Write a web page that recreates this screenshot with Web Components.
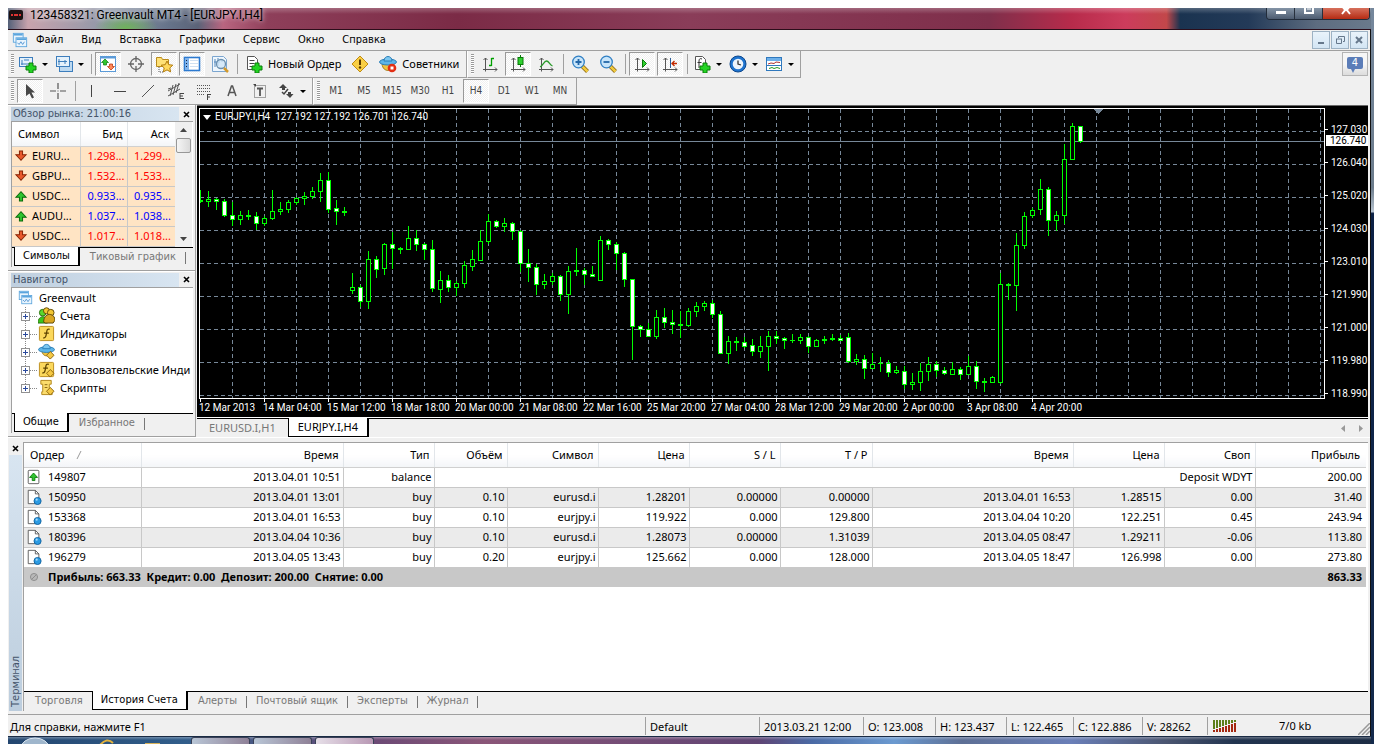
<!DOCTYPE html>
<html lang="ru">
<head>
<meta charset="utf-8">
<title>123458321: Greenvault MT4 - [EURJPY.I,H4]</title>
<style>
    body {
        margin: 0;
        padding: 8px 4px 0 8px;
        box-sizing: border-box;
        min-height: 100vh;
        display: flex;
        background: #fff;
        color: #000;
        font: 11px/16px "Noto Sans", "Open Sans", sans-serif;
        --narrow: "DejaVu Sans Condensed", "Noto Sans", sans-serif;
        --face: #f0f0f0;
        --line: #a0a0a0;
    }
    app-window { flex: 1; min-width: 0; }
</style>
</head>
<body>
<app-window>
    <title-bar slot="title">123458321: Greenvault MT4 - [EURJPY.I,H4]</title-bar>
    <menu-bar slot="menu"></menu-bar>
    <tool-row slot="tools">
        <tool-band>
            <tool-button icon="newchart" drop label="Новый график"></tool-button>
            <tool-button icon="profiles" drop label="Профили"></tool-button>
            <tool-sep></tool-sep>
            <tool-button icon="market" pressed label="Обзор рынка"></tool-button>
            <tool-button icon="target" label="Окно данных"></tool-button>
            <tool-button icon="folder" pressed label="Навигатор"></tool-button>
            <tool-button icon="terminal" pressed label="Терминал"></tool-button>
            <tool-button icon="tester" label="Тестер стратегий"></tool-button>
            <tool-sep></tool-sep>
            <tool-button icon="order">Новый Ордер</tool-button>
            <tool-button icon="warn" label="MetaEditor"></tool-button>
            <tool-button icon="experts">Советники</tool-button>
        </tool-band>
        <tool-band>
            <tool-button icon="bars" label="Бары"></tool-button>
            <tool-button icon="candles" pressed label="Японские свечи"></tool-button>
            <tool-button icon="linechart" label="Линия"></tool-button>
            <tool-sep></tool-sep>
            <tool-button icon="zoomin" label="Увеличить"></tool-button>
            <tool-button icon="zoomout" label="Уменьшить"></tool-button>
            <tool-sep></tool-sep>
            <tool-button icon="autoscroll" pressed label="Автопрокрутка"></tool-button>
            <tool-button icon="shift" pressed label="Сдвиг графика"></tool-button>
            <tool-sep></tool-sep>
            <tool-button icon="indicators" drop label="Индикаторы"></tool-button>
            <tool-button icon="clock" drop label="Периоды"></tool-button>
            <tool-button icon="templates" drop label="Шаблоны"></tool-button>
        </tool-band>
        <news-button slot="end">4</news-button>
    </tool-row>
    <tool-row slot="tools">
        <tool-band>
            <tool-button icon="cursor" pressed label="Курсор"></tool-button>
            <tool-button icon="cross" label="Перекрестие"></tool-button>
            <tool-sep></tool-sep>
            <tool-button icon="vline" label="Вертикальная линия"></tool-button>
            <tool-button icon="hline" label="Горизонтальная линия"></tool-button>
            <tool-button icon="trend" label="Трендовая линия"></tool-button>
            <tool-button icon="channel" label="Канал"></tool-button>
            <tool-button icon="fibo" label="Фибоначчи"></tool-button>
            <tool-button icon="textA" label="Текст"></tool-button>
            <tool-button icon="textT" label="Метка"></tool-button>
            <tool-button icon="arrows" drop label="Стрелки"></tool-button>
        </tool-band>
        <tool-band>
            <tool-button period>M1</tool-button>
            <tool-button period>M5</tool-button>
            <tool-button period>M15</tool-button>
            <tool-button period>M30</tool-button>
            <tool-button period>H1</tool-button>
            <tool-button period pressed>H4</tool-button>
            <tool-button period>D1</tool-button>
            <tool-button period>W1</tool-button>
            <tool-button period>MN</tool-button>
        </tool-band>
    </tool-row>
    <dock-panel slot="left" heading="Обзор рынка: 21:00:16">
        <market-watch></market-watch>
        <tab-strip slot="tabs" tabs="Символы|Тиковый график" active="0"></tab-strip>
    </dock-panel>
    <dock-panel slot="left" heading="Навигатор" grow>
        <nav-tree></nav-tree>
        <tab-strip slot="tabs" tabs="Общие|Избранное" active="0"></tab-strip>
    </dock-panel>
    <price-chart slot="chart"></price-chart>
    <tab-strip slot="chart" class="charts" tabs="EURUSD.I,H1|EURJPY.I,H4" active="1" scroll></tab-strip>
    <trade-terminal slot="terminal"></trade-terminal>
    <status-bar slot="status"></status-bar>
</app-window>

<script>
const G = '#00a000';
const axes = '<path d="M4.500 3v13.500M2 14.500h14M2.500 5l2-2 2 2M14 12.500l2 2-2 2" fill="none" stroke="#555"/>';
const plus = '<path d="M10 8h4v3h3v4h-3v3h-4v-3H7v-4h3z" fill="#22d422" stroke="#0a7d0a"/>';

const ICONS = {
    newchart: `<rect x=".5" y="2.500" width="13" height="9" fill="#e4f1fb" stroke="#3d7ebd"/><path d="M3 5v5M2 9h9M5 5h5" stroke="#3d7ebd" fill="none"/>${plus}`,
    profiles: '<rect x="4.500" y="6.500" width="13" height="10" fill="#bcd9f1" stroke="#3d7ebd"/><rect x="1.500" y="1.500" width="13" height="10" fill="#e4f1fb" stroke="#3d7ebd"/><path d="M4 4v6M3 6.500h9M10 5v4" stroke="#3d7ebd"/>',
    market: '<rect x="1.500" y="1.500" width="15" height="15" fill="#fff" stroke="#5b9bd8"/><path d="M1 2.500h16" stroke="#5b9bd8" stroke-width="2"/><path d="M6 4l3.500 3.500H7.500V10h-3V7.500h-2z" fill="#2fc62f" stroke="#087808" stroke-width=".7"/><path d="M12 15l-3.500-3.500h2V9h3v2.500h2z" fill="#ff8a5a" stroke="#b52a00" stroke-width=".7"/>',
    target: '<circle cx="9" cy="9" r="5.500" fill="none" stroke="#666" stroke-width="1.300"/><path d="M9 1v6M9 11v6M1 9h6M11 9h6" stroke="#666" stroke-width="1.300"/>',
    folder: '<path d="M1.500 2.500h5l1 2h6v7h-12z" fill="#ffe177" stroke="#b98b1c"/><path d="M4 12v5h4" fill="none" stroke="#555" stroke-dasharray="1 1"/><path d="M12 6l1.800 3.700 4 .5-3 2.700.8 4-3.600-2-3.600 2 .8-4-3-2.700 4-.5z" fill="#ffd95e" stroke="#b27b0c"/>',
    terminal: '<rect x="1.500" y="2.500" width="15" height="13" fill="#fff" stroke="#2d7ad0" stroke-width="1.600"/><path d="M2 3h4v12H2z" fill="#7fb2ea"/><path d="M7 5.500h8M7 8.500h8M7 11.500h8" stroke="#cfe0f2"/><path d="M3 5.500h1M3 8.500h1M3 11.500h1" stroke="#124"/>',
    tester: '<path d="M1.500 1.500h11l3 3v12h-14z" fill="#eef6fd" stroke="#7ba5cf"/><path d="M4 4v8M7 3v8M3 7h6M11 4v3" stroke="#5588bb"/><circle cx="10" cy="9" r="4.500" fill="#cfe6f8" fill-opacity=".8" stroke="#6b8fae" stroke-width="1.300"/><path d="M13 13l4 4" stroke="#d39a2c" stroke-width="2.500"/>',
    order: `<path d="M2.500 1.500h7l3 3v10h-10z" fill="#fff" stroke="#555"/><path d="M4.500 5.500h5M4.500 8.500h5M4.500 11.500h3" stroke="#444"/>${plus}`,
    warn: '<path d="M9 1l8 8-8 8-8-8z" fill="#f9cf45" stroke="#c08b12"/><path d="M9 4.500v5.500" stroke="#5a3a00" stroke-width="2"/><circle cx="9" cy="12.500" r="1.200" fill="#5a3a00"/>',
    experts: '<path d="M3 9c1 9 11 8 12 0z" fill="#f0c240" stroke="#a8801c"/><ellipse cx="9" cy="7" rx="8.500" ry="3" fill="#5db5e8" stroke="#2b7fb8"/><path d="M5 6c0-6 8-6 8 0z" fill="#7cc7f0" stroke="#2b7fb8"/><circle cx="13" cy="13" r="4.300" fill="#e22e14"/><rect x="11.500" y="11.500" width="3" height="3" fill="#fff"/>',
    bars: `${axes}<path d="M10.500 3v8M8 10.500h2.500M10.500 3.500H13" stroke="${G}" fill="none" stroke-width="1.300"/>`,
    candles: `${axes}<path d="M11.500 0v12" stroke="#087808"/><rect x="9" y="2.500" width="5" height="7" fill="#2fd02f" stroke="#087808"/>`,
    linechart: `${axes}<path d="M3 12c3-1 4-6 6.500-6s3 4 6 5" stroke="#2a9a2a" fill="none" stroke-width="1.300"/>`,
    zoomin: '<path d="M11 11l5.500 5.500" stroke="#8a6510" stroke-width="4"/><path d="M11 11l5.500 5.500" stroke="#f0c93c" stroke-width="2.500"/><circle cx="7.500" cy="7" r="5.800" fill="#c8e5fa" stroke="#2f7fc4" stroke-width="1.300"/><path d="M4.500 7h6M7.500 4v6" stroke="#2367a8" stroke-width="1.800"/>',
    zoomout: '<path d="M11 11l5.500 5.500" stroke="#8a6510" stroke-width="4"/><path d="M11 11l5.500 5.500" stroke="#f0c93c" stroke-width="2.500"/><circle cx="7.500" cy="7" r="5.800" fill="#c8e5fa" stroke="#2f7fc4" stroke-width="1.300"/><path d="M4.500 7h6" stroke="#2367a8" stroke-width="1.800"/>',
    autoscroll: `${axes}<path d="M9.500 4.500l4 4-4 4z" fill="#2fd02f" stroke="#087808"/>`,
    shift: `${axes}<path d="M9.500 3v10" stroke="#2d5f9a"/><path d="M11 8.500h5M13.500 6L11 8.500l2.500 2.500" fill="none" stroke="#c22a00" stroke-width="1.300"/>`,
    indicators: `<path d="M2.500 1.500h7l3 3v10h-10z" fill="#fff" stroke="#555"/><path d="M9 4c-2-1-3 0-3 2v7M4.500 7.500h4" stroke="#333" fill="none"/>${plus}`,
    clock: '<circle cx="9" cy="9" r="8" fill="#1f74cf" stroke="#0d478c"/><circle cx="9" cy="9" r="5.300" fill="#eef5fc"/><path d="M9 5.500V9l3 1" fill="none" stroke="#333" stroke-width="1.300"/>',
    templates: '<rect x="1.500" y="2.500" width="15" height="13" fill="#fff" stroke="#2f78bd"/><path d="M2 3h14v3H2z" fill="#6db0ea"/><path d="M3 9l3-1 3 .5 2-1.500 4 .5" stroke="#a33" fill="none"/><path d="M2 10.500h14" stroke="#2f78bd"/><path d="M4 13.500l3-1 2 1 3-1 3 1" stroke="#292" fill="none"/>',
    cursor: '<path d="M5 2l9 8.500H10.500l2.500 5-2 1-2.500-5L5 14z" fill="#484848"/>',
    cross: '<path d="M9 1v6M9 11v6M1 9h6M11 9h6M8.500 9h1" stroke="#555" stroke-width="1.200"/>',
    vline: '<path d="M8.500 3v12" stroke="#444"/>',
    hline: '<path d="M3 9.500h12" stroke="#444"/>',
    trend: '<path d="M3 15L15 3" stroke="#555"/>',
    channel: '<path d="M1 9l12-7M1 14l12-7M3 14L6 3M6 13l3-11M9 11l3-10M1 7l3-1" stroke="#555"/><path d="M13 11v6M13 11.500h4M13 14h3M13 16.500h4" stroke="#444" fill="none"/>',
    fibo: '<path d="M2 3.500h14M2 6.500h14M2 9.500h14M2 12.500h8" stroke="#555" stroke-dasharray="1 1"/><path d="M12.500 12v6M12.500 12.500H16M12.500 15H15" stroke="#444" fill="none"/>',
    textA: '<path d="M5 14L8.500 4h1L13 14M6.500 10.500h5" fill="none" stroke="#555" stroke-width="1.500"/>',
    textT: '<rect x="3.500" y="3.500" width="11" height="12" fill="none" stroke="#555" stroke-dasharray="1 1"/><path d="M6 6.500h6M9 6.500V14" stroke="#555" stroke-width="1.800"/><path d="M2 2h3v3z" fill="#444"/>',
    arrows: '<path d="M6 2l4 4H8v2H5V6H2z" fill="#444"/><path d="M5 10l2 2 4-5" fill="none" stroke="#444" stroke-width="1.500"/><path d="M13 16l-4-4h2v-2h3v2h2.500z" fill="#444"/>',
    windows: '<rect x="1.500" y="1.500" width="11" height="10" fill="#eaf5fd" stroke="#5ba5dd"/><path d="M2 3h10" stroke="#5ba5dd" stroke-width="2"/><rect x="4.500" y="6.500" width="12" height="10" fill="#eaf5fd" stroke="#5ba5dd"/><path d="M5 8h11" stroke="#5ba5dd" stroke-width="2"/><path d="M6 12l2 2 2-3 2 3 2-3" fill="none" stroke="#4a8fd0"/>',
    down: '<path d="M7 2.500h4v5h4.500L9 14.500 2.500 7.500H7z" fill="#e9582b" stroke="#8a2506" stroke-width="1.300"/>',
    up: '<path d="M7 15.500h4v-5h4.500L9 3.500 2.500 10.500H7z" fill="#2fc42f" stroke="#0a6a0a" stroke-width="1.300"/>',
    accounts: '<circle cx="5" cy="6" r="3.500" fill="#58d82e" stroke="#2a6f10"/><path d="M0 17c0-9 10-9 10 0z" fill="#39c61c" stroke="#2a6f10"/><circle cx="9" cy="4" r="3.200" fill="#f2c632" stroke="#5c4708"/><circle cx="13.500" cy="6" r="3.500" fill="#f2c632" stroke="#5c4708"/><path d="M6 16c0-11 12-10 12-2l-2 3H8z" fill="#d9a520" stroke="#5c4708"/>',
    func: '<rect x="1.500" y="1.500" width="15" height="15" rx="1" fill="#fbd85c" stroke="#bb8c1d"/><path d="M12.500 4.500c-3-1-3 1-3.500 4s-1 6-3.500 5M6.500 8.500h5" fill="none" stroke="#5e4300" stroke-width="1.300"/>',
    funcs: '<rect x="1.500" y="1.500" width="15" height="15" rx="1" fill="#fbd85c" stroke="#bb8c1d"/><path d="M11.500 3.500c-3-1-3 1-3.500 4s-1 6-3.500 5M5.500 7.500h5" fill="none" stroke="#5e4300" stroke-width="1.300"/><path d="M13 9l4 4-4 4-4-4z" fill="#f5c843" stroke="#8a6510"/>',
    hat: '<path d="M4 8c1 8 9 7 10 0z" fill="#f0c240" stroke="#a8801c"/><ellipse cx="9" cy="7" rx="8.500" ry="3" fill="#5db5e8" stroke="#2b7fb8"/><path d="M5 6c0-6 8-6 8 0z" fill="#7cc7f0" stroke="#2b7fb8"/><path d="M13 9l4 4-4 4-4-4z" fill="#f5c843" stroke="#8a6510"/>',
    script: '<path d="M3 1.500h11v4h-2v8h3v3H4v-3h1v-8H3z" fill="#fbdc6c" stroke="#b08518"/><path d="M7 6h3M7 9h3" stroke="#8a6510"/><path d="M13 9l4 4-4 4-4-4z" fill="#f5c843" stroke="#8a6510"/>',
    deposit: '<rect x="2.500" y="1.500" width="12" height="15" rx="1" fill="#fff" stroke="#555"/><path d="M7 13h3V9.500h3L8.500 4.500 4 9.500h3z" fill="#2fc42f" stroke="#0a7a0a"/>',
    deal: '<path d="M2.500 1.500h8l4 4v11h-12z" fill="#fff" stroke="#555"/><path d="M10.500 1.500v4h4" fill="none" stroke="#555"/><circle cx="13" cy="13.500" r="4" fill="#2b9be3" stroke="#0d5f9c"/><circle cx="12" cy="12" r="1.200" fill="#a5dbfb"/>',
    total: '<circle cx="9" cy="9" r="4" fill="#b8b8b8" stroke="#888"/><path d="M6.500 11.500l5-5" stroke="#888"/>'
};

// helper: attach an open root and fill it
function shadow(el, css, html) {
    const root = el.attachShadow({ mode: 'open' });
    root.innerHTML = `<style>:host, * { box-sizing: border-box; } button { font: inherit; color: inherit; }${css}</style>${html}`;
    return root;
}

class XIcon extends HTMLElement {
    connectedCallback() {
        shadow(this, `:host { display: block; width: 18px; height: 18px; flex: none; } svg { display: block; width: 100%; height: 100%; }`,
            `<svg viewBox="0 0 18 18" aria-hidden="true">${ICONS[this.getAttribute('name')] || ''}</svg>`);
    }
}
customElements.define('x-icon', XIcon);

class AppWindow extends HTMLElement {
    connectedCallback() {
        shadow(this, `
            :host {
                display: flex; flex-direction: column;
                border-right: 3px solid #3b4a60;
                border-image: linear-gradient(#75879c, #6c7c8c 180px, #b7c3cf 204px, #0c2145 206px, #142a4c) 1;
            }
            .client { flex: 1; display: flex; flex-direction: column; background: var(--face); border-right: 1px solid #111; }
            .middle { display: flex; }
            .left { width: 188px; display: flex; flex-direction: column; flex: none; border-right: 1px solid var(--line); }
            .chart { flex: 1; min-width: 0; display: flex; flex-direction: column; padding: 0 2px 0 1px; }
            .terminal { flex: 1; display: flex; border-top: 1px solid #fff; }
            ::slotted(trade-terminal) { flex: 1; }
        `, `
            <slot name="title"></slot>
            <div class="client">
                <slot name="menu"></slot>
                <slot name="tools"></slot>
                <div class="middle">
                    <div class="left"><slot name="left"></slot></div>
                    <div class="chart"><slot name="chart"></slot></div>
                </div>
                <div class="terminal"><slot name="terminal"></slot></div>
                <slot name="status"></slot>
            </div>
            <task-bar></task-bar>
        `);
    }
}
customElements.define('app-window', AppWindow);

class TitleBar extends HTMLElement {
    connectedCallback() {
        shadow(this, `
            :host {
                display: flex; align-items: flex-start; height: 22px;
                border-bottom: 1px solid #2b0d1a;
                background:
                    linear-gradient(#ffffff40, #ffffff00 6px),
                    radial-gradient(ellipse 32px 16px at 118px 20px, #6fb25b, #6fb25b00),
                    linear-gradient(90deg, #536078, #c8a3ad 20px, #8e97a8 100px, #66738a 160px, #5b6378 190px, #b96580 215px, #8e3f5a 260px, #7b2b46 33%, #8a3d59 50%, #7f2f4b 72%, #b72b4b 78%, #cc3c5c 82%, #c2474a 85%, #1a3350 86%, #233a58 91%, #5d6c80 96%, #6a7a8c);
                font: 12px/14px Roboto, "Noto Sans", sans-serif;
            }
            .logo { width: 14px; height: 10px; margin: 2px 7px 0 1px; background: #1b1112; border-radius: 2px; color: #d22; }
            .logo svg { display: block; }
            .text { text-shadow: 0 0 6px #fffa, 0 0 4px #fff8; flex: 1; }
            .caption { display: flex; margin-right: 1px; border: 1px solid #222c3a; border-top: 0; border-radius: 0 0 4px 4px; overflow: hidden; }
            button { display: flex; justify-content: center; border: 0; border-right: 1px solid #27303c; padding: 0; width: 28px; height: 11px; background: linear-gradient(#8494a6, #4d5c70); }
            button:last-child { width: 46px; border-right: 0; background: linear-gradient(#d6705c, #b52b13); }
            button svg { display: block; width: 12px; height: 10px; }
        `, `
            <div class="logo"><svg viewBox="0 0 14 10"><path d="M2 5h2M5 5h4M10 5h2" stroke="#d33" stroke-width="2"/></svg></div>
            <div class="text"><slot></slot></div>
            <div class="caption">
                <button aria-label="Свернуть"><svg viewBox="0 0 12 10"><rect x="1" y="3" width="10" height="3" fill="#fff"/></svg></button>
                <button aria-label="Развернуть"><svg viewBox="0 0 12 10"><path d="M2 0v5h8V0" fill="none" stroke="#fff" stroke-width="2"/><path d="M4 1h4" stroke="#fff"/></svg></button>
                <button aria-label="Закрыть"><svg viewBox="0 0 12 10"><path d="M2 6l4-5 4 5M3 0l3 2 3-2" fill="none" stroke="#fff" stroke-width="2"/></svg></button>
            </div>
        `);
    }
}
customElements.define('title-bar', TitleBar);

class MenuBar extends HTMLElement {
    connectedCallback() {
        const items = ['Файл', 'Вид', 'Вставка', 'Графики', 'Сервис', 'Окно', 'Справка'];
        shadow(this, `
            :host { display: flex; align-items: center; height: 21px; padding: 0 2px 0 4px; border-bottom: 1px solid var(--line); font-family: var(--narrow); }
            nav { flex: 1; display: flex; gap: 18px; margin-left: 8px; }
            nav button { border: 0; padding: 0; background: none; }
            x-icon { width: 16px; height: 16px; }
            .mdi { display: flex; gap: 1px; }
            .mdi button { width: 18px; height: 18px; padding: 0; border: 1px solid #9db2c4; background: linear-gradient(#e9f3fb, #d3e5f4); display: grid; place-items: center; }
            .mdi svg { width: 10px; height: 10px; }
        `, `
            <x-icon name="windows"></x-icon>
            <nav>${items.map(t => `<button>${t}</button>`).join('')}</nav>
            <div class="mdi">
                <button aria-label="Свернуть"><svg viewBox="0 0 10 10"><path d="M2 8h6" stroke="#66788c" stroke-width="2"/></svg></button>
                <button aria-label="Восстановить"><svg viewBox="0 0 10 10"><path d="M3.500 3V1.500h6v5H8M1 4h6M1.500 4v4.500h5V4" fill="none" stroke="#66788c"/></svg></button>
                <button aria-label="Закрыть"><svg viewBox="0 0 10 10"><path d="M2 2l6 6M8 2L2 8" stroke="#66788c" stroke-width="2"/></svg></button>
            </div>
        `);
    }
}
customElements.define('menu-bar', MenuBar);

class ToolRow extends HTMLElement {
    connectedCallback() {
        shadow(this, `
            :host { display: flex; height: 27px; padding-right: 2px; }
            ::slotted([slot="end"]) { margin-left: auto; }
        `, `<slot></slot><slot name="end"></slot>`);
    }
}
customElements.define('tool-row', ToolRow);

class ToolBand extends HTMLElement {
    connectedCallback() {
        shadow(this, `
            :host { display: flex; align-items: center; gap: 2px; padding: 0 3px 0 3px; border-right: 1px solid var(--line); border-bottom: 1px solid var(--line); }
            :host(:not(:first-child)) { border-left: 1px solid #fff; }
            .grip { width: 3px; height: 20px; margin-right: 1px; background: repeating-linear-gradient(#999 0 1px, #fff 1px 2px); }
        `, `<span class="grip"></span><slot></slot>`);
    }
}
customElements.define('tool-band', ToolBand);

class ToolSep extends HTMLElement {
    connectedCallback() {
        shadow(this, `:host { display: flex; justify-content: center; width: 4px; height: 20px; } i { width: 1px; background: var(--line); }`, '<i></i>');
    }
}
customElements.define('tool-sep', ToolSep);

class ToolButton extends HTMLElement {
    connectedCallback() {
        const icon = this.getAttribute('icon');
        const label = this.getAttribute('label');
        shadow(this, `
            :host { display: block; }
            button { display: flex; align-items: center; justify-content: center; gap: 5px; min-width: 26px; height: 24px; padding: 0 3px; border: 1px solid transparent; background: none; white-space: nowrap; }
            :host([pressed]) button { border-color: #999 #fff #fff #999; background: repeating-conic-gradient(#fff 0 25%, #f0f0f0 0 50%) 0 0 / 2px 2px; }
            :host([drop]) button { width: 34px; padding: 0 1px; gap: 2px; justify-content: flex-start; }
            :host([period]) button { padding: 0; font-family: var(--narrow); font-size: 10px; color: #444; }
            .arrow { border: 3px solid transparent; border-top-color: #000; border-bottom: 0; margin-left: 3px; }
        `, `
            <button${label ? ` aria-label="${label}"` : ''}>
                ${icon ? `<x-icon name="${icon}"></x-icon>` : ''}<slot></slot>
                ${this.hasAttribute('drop') ? '<span class="arrow"></span>' : ''}
            </button>
        `);
    }
}
customElements.define('tool-button', ToolButton);

class NewsButton extends HTMLElement {
    connectedCallback() {
        shadow(this, `
            :host { display: block; padding-top: 1px; }
            button { width: 26px; height: 24px; padding: 0; border: 1px solid #b4b4b4; background: linear-gradient(#f6f6f6 50%, #dcdcdc); display: flex; justify-content: center; align-items: flex-start; }
            span { display: block; width: 16px; height: 12px; margin-top: 4px; background: #5b7db8; border-radius: 2px; color: #fff; font: 11px/12px var(--narrow); position: relative; }
            span::after { content: ""; position: absolute; left: 4px; top: 12px; border: 2px solid transparent; border-top: 4px solid #5b7db8; border-bottom: 0; }
        `, `<button><span><slot></slot></span></button>`);
    }
}
customElements.define('news-button', NewsButton);

class DockPanel extends HTMLElement {
    connectedCallback() {
        shadow(this, `
            :host { display: flex; flex-direction: column; padding: 1px 2px 3px 3px; border-top: 1px solid #fff; border-bottom: 1px solid var(--line); }
            :host([grow]) { flex: 1; }
            header { display: flex; height: 14px; font: 11px/13px var(--narrow); color: #44546a; }
            h2 { flex: 1; margin: 0; padding-left: 2px; font: inherit; background: linear-gradient(90deg, #bfcfdf, #d8e5f1); }
            header button { width: 14px; padding: 0; border: 0; background: none; display: grid; place-items: center; }
            .body { flex: 1; display: flex; flex-direction: column; border: 1px solid var(--line); border-width: 1px 0 0 1px; background: #fff; min-width: 0; overflow: hidden; }
            .fill { flex: 1; }
        `, `
            <header><h2>${this.getAttribute('heading')}</h2><button aria-label="Закрыть"><svg width="7" height="7" viewBox="0 0 7 7"><path d="M1 1l5 5M6 1L1 6" stroke="#000" stroke-width="1.600"/></svg></button></header>
            <div class="body"><div class="fill"><slot></slot></div><slot name="tabs"></slot></div>
        `);
    }
}
customElements.define('dock-panel', DockPanel);

class TabStrip extends HTMLElement {
    connectedCallback() {
        const active = Number(this.getAttribute('active'));
        const tabs = this.getAttribute('tabs').split('|');
        const scroll = this.hasAttribute('scroll');
        shadow(this, `
            :host { display: flex; align-items: flex-start; height: 20px; padding-left: 2px; border-top: 1px solid #000; background: var(--face); font: 11px/16px var(--narrow); color: #777; }
            :host(.charts) { height: 19px; padding-left: 0; font-family: "Noto Sans", sans-serif; }
            button { height: 18px; padding: 0 9px; border: 0; background: none; white-space: nowrap; line-height: 18px; }
            button + button { padding-left: 10px; }
            button.on { margin-top: -1px; height: 19px; padding: 0 8px; background: #fff; color: #000; border: 1px solid #000; border-top: 0; border-right-width: 2px; }
            i { width: 1px; height: 12px; margin-top: 4px; background: #777; }
            :host(.charts) button { padding: 0 12px; }
            :host(.charts) button.on { padding: 0 9px; }
            .scroll { margin-left: auto; display: flex; gap: 10px; padding: 6px 4px 0 0; }
            .scroll svg { display: block; }
        `, tabs.map((t, i) => `<button class="${i === active ? 'on' : ''}">${t}</button>${i > active && !scroll ? '<i></i>' : ''}`).join('')
            + (scroll ? '<span class="scroll"><svg width="7" height="7"><path d="M5 0v7L1 3.500z" fill="#999"/></svg><svg width="7" height="7"><path d="M2 0v7l4-3.500z" fill="#999"/></svg></span>' : ''));
    }
}
customElements.define('tab-strip', TabStrip);

class MarketWatch extends HTMLElement {
    connectedCallback() {
        const rows = [
            ['down', 'EURU...', '1.298...', '1.299...'],
            ['down', 'GBPU...', '1.532...', '1.533...'],
            ['up', 'USDC...', '0.933...', '0.935...'],
            ['up', 'AUDU...', '1.037...', '1.038...'],
            ['down', 'USDC...', '1.017...', '1.018...']
        ];
        shadow(this, `
            :host { display: flex; }
            table { flex: 1; border-collapse: collapse; table-layout: fixed; width: 100%; }
            th { height: 24px; padding: 0 4px; font-weight: normal; text-align: right; background: linear-gradient(#fff 50%, #f3f5f8); border-right: 1px solid #e2e6ea; border-bottom: 1px solid #d0d0d0; }
            th:first-child { text-align: left; width: 68px; padding-left: 6px; }
            th:last-child { width: 48px; border-right: 0; padding-right: 6px; }
            td { height: 20px; padding: 0 2px; text-align: right; background: #ffe4c4; border-right: 1px solid #c8c8c8; border-bottom: 1px solid #c8c8c8; }
            td:last-child { border-right: 0; padding-right: 4px; }
            td:first-child { color: #000; }
            td span { display: flex; align-items: center; gap: 4px; }
            td x-icon { width: 14px; height: 14px; }
            .down { color: #f00; }
            .up { color: #00f; }
            .bar { width: 17px; display: flex; flex-direction: column; align-items: center; background: #f0f0f0; padding: 6px 1px; margin-right: 1px; }
            .bar svg { display: block; flex: none; }
            .thumb { width: 15px; height: 15px; margin-top: 6px; border: 1px solid #979797; border-radius: 2px; background: linear-gradient(90deg, #f5f5f5, #dadada); }
            .gap { flex: 1; }
        `, `
            <table>
                <thead><tr><th>Символ</th><th>Бид</th><th>Аск</th></tr></thead>
                <tbody>${rows.map(([dir, name, bid, ask]) => `<tr class="${dir}"><td><span><x-icon name="${dir}"></x-icon>${name}</span></td><td>${bid}</td><td>${ask}</td></tr>`).join('')}</tbody>
            </table>
            <div class="bar">
                <svg width="7" height="4"><path d="M0 4l3.500-4L7 4z" fill="#444"/></svg>
                <div class="thumb"></div><div class="gap"></div>
                <svg width="7" height="4"><path d="M0 0l3.500 4L7 0z" fill="#444"/></svg>
            </div>
        `);
    }
}
customElements.define('market-watch', MarketWatch);

class NavTree extends HTMLElement {
    connectedCallback() {
        const nodes = [['accounts', 'Счета'], ['func', 'Индикаторы'], ['hat', 'Советники'], ['funcs', 'Пользовательские Инди'], ['script', 'Скрипты']];
        shadow(this, `
            :host { display: block; padding: 1px 0 8px 6px; overflow: hidden; }
            ul { list-style: none; margin: 0; padding: 0; }
            li, .root { display: flex; align-items: center; height: 18px; white-space: nowrap; }
            .root { gap: 6px; }
            .root x-icon { width: 15px; height: 15px; }
            li x-icon { width: 17px; height: 17px; margin-right: 5px; }
            svg.plus { width: 20px; height: 18px; flex: none; }
        `, `
            <div class="root"><x-icon name="windows"></x-icon>Greenvault</div>
            <ul>${nodes.map(([icon, text], i) => `
                <li><svg class="plus" viewBox="0 0 20 18"><path d="M7.500 0V${i < nodes.length - 1 ? 18 : 9}M12 9.500h8" stroke="#888" stroke-dasharray="1 1" fill="none"/><rect x="3.500" y="5.500" width="8" height="8" fill="#fff" stroke="#919191"/><path d="M5 9.500h5M7.500 7v5" stroke="#2b4a9c"/></svg><x-icon name="${icon}"></x-icon>${text}</li>`).join('')}
            </ul>
        `);
    }
}
customElements.define('nav-tree', NavTree);

// high, body top, body bottom, low, kind: 0 hollow, 1 filled, 2 flat
const CANDLES = [
    [190,200,201,202,2],[191,199,201,206,0],[198,199,201,209,1],[199,201,215,216,1],[202,215,219,225,1],[211,215,219,224,0],[210,215,216,219,2],[212,216,223,229,1],
    [216,218,223,225,0],[190,211,218,219,0],[202,209,211,214,0],[200,202,209,212,0],[197,198,202,204,0],[192,196,198,204,0],[187,191,196,198,0],[173,180,191,201,0],
    [172,180,209,212,1],[200,208,211,224,1],[207,211,212,215,2],[273,287,290,293,0],[285,287,301,306,1],[251,259,301,308,0],[256,259,269,277,1],[243,244,268,274,0],
    [232,244,248,268,1],[247,248,249,253,2],[226,238,249,249,0],[230,238,244,250,1],[243,244,249,259,1],[240,249,288,291,1],[271,280,289,302,0],[275,280,287,291,1],
    [281,283,287,295,0],[261,265,283,287,0],[250,259,266,270,0],[230,241,260,260,0],[214,221,241,243,0],[220,221,226,227,1],[218,223,226,231,0],[222,223,231,239,1],
    [230,231,263,271,1],[249,263,267,281,1],[264,267,284,294,1],[274,281,284,288,0],[273,276,281,284,0],[275,276,294,300,1],[266,271,294,313,0],[248,270,271,275,2],
    [268,270,274,284,1],[266,274,276,276,1],[236,240,280,280,0],[239,240,244,249,1],[242,244,253,269,1],[252,253,279,286,1],[279,279,326,359,1],[325,326,329,336,1],
    [323,329,336,336,1],[310,317,336,338,0],[308,317,322,327,1],[310,322,324,333,1],[311,324,325,337,2],[308,311,325,326,0],[302,306,311,316,0],[301,303,306,310,0],
    [300,303,314,317,1],[311,314,353,353,1],[336,341,353,363,0],[337,341,342,350,2],[337,342,346,347,1],[339,345,351,355,1],[336,346,351,357,0],[331,336,346,370,0],
    [331,336,338,343,1],[337,338,340,348,1],[334,340,340,342,2],[334,337,340,343,0],[336,337,346,352,1],[339,340,346,346,0],[336,339,340,343,2],[334,338,339,340,2],
    [335,338,340,340,1],[333,337,361,362,1],[354,359,361,364,0],[355,359,368,378,1],[353,364,368,368,0],[357,363,363,371,2],[360,363,372,376,1],[366,370,372,373,0],
    [366,371,384,388,1],[373,382,384,389,0],[363,371,382,390,0],[357,364,371,380,0],[361,364,370,376,1],[367,370,373,374,1],[362,369,374,374,0],[367,369,374,379,1],
    [356,366,374,374,0],[361,366,381,388,1],[378,381,382,391,2],[376,377,382,382,0],[273,284,382,383,0],[283,284,285,299,2],[233,245,285,310,0],[212,216,245,248,0],
    [208,210,215,217,0],[179,189,209,214,0],[187,189,220,235,1],[211,215,220,230,0],[144,159,215,223,0],[123,126,159,159,0],[126,126,141,142,1]
];

class PriceChart extends HTMLElement {
    connectedCallback() {
        const prices = ['127.030', '126.040', '125.020', '124.030', '123.010', '121.990', '121.000', '119.980', '118.990'];
        const dates = ['12 Mar 2013', '14 Mar 04:00', '15 Mar 12:00', '18 Mar 18:00', '20 Mar 00:00', '21 Mar 08:00', '22 Mar 16:00', '25 Mar 20:00', '27 Mar 04:00', '28 Mar 12:00', '29 Mar 20:00', '2 Apr 00:00', '3 Apr 08:00', '4 Apr 20:00'];
        const top = 109; // first pixel row of the plot in candle data
        const bodies = CANDLES.map(([h, t, b, l, kind], i) => {
            const x = i * 8;
            const wick = `<rect x="${x}" y="${h - top}" width="1" height="${l - h + 1}" fill="#0f0"/>`;
            const body = `<rect x="${x - 2}" y="${t - top}" width="5" height="${b - t + 1}" fill="#0f0"/>`;
            const core = kind < 2 ? `<rect x="${x - 1}" y="${t - top + 1}" width="3" height="${Math.max(b - t - 1, 0)}" fill="${kind ? '#fff' : '#000'}"/>` : '';
            return wick + body + core;
        }).join('');
        const rows = prices.map((p, i) => `<path d="M0 ${22.5 + i * 33}H4000"/>`).join('');
        const cols = Array.from({ length: 60 }, (_, i) => `<path d="M${32.5 + i * 32} 0V400"/>`).join('');
        shadow(this, `
            :host { display: block; border-top: 1px solid #696969; border-bottom: 1px solid #fff; }
            .frame { display: grid; grid-template-columns: 1fr 43px; grid-template-rows: 291px 18px; background: #000; padding: 2px 0 0 2px; color: #fff; font: 10px/12px Roboto, "Noto Sans", sans-serif; }
            .plot { border: 1px solid #fff; position: relative; min-width: 0; overflow: hidden; }
            .plot > svg { display: block; width: 100%; height: 289px; }
            .caption { position: absolute; left: 3px; top: 2px; display: flex; align-items: center; gap: 4px; white-space: pre; }
            .prices { grid-row: span 2; padding-top: 5px; position: relative; }
            .prices div { height: 33px; display: flex; align-items: center; gap: 3px; }
            .prices div::before { content: ""; width: 3px; height: 1px; background: #fff; }
            .prices .now { position: absolute; left: 1px; right: 0; top: 27px; height: 11px; padding-left: 4px; background: #fff; color: #000; }
            .prices .now::before { display: none; }
            .dates { display: flex; overflow: hidden; }
            .dates div { width: 64px; flex: none; white-space: nowrap; }
            .dates div::before { content: ""; display: block; width: 1px; height: 3px; margin: 0 0 0 1px; background: #fff; }
        `, `
            <div class="frame">
                <div class="plot">
                    <svg shape-rendering="crispEdges">
                        <g stroke="#778899" stroke-dasharray="4 3">${rows}${cols}</g>
                        <path d="M0 32.500H4000" stroke="#778899"/>
                        <path d="M893 0h10l-5 5z" fill="#778899"/>
                        ${bodies}
                    </svg>
                    <div class="caption"><svg width="8" height="5"><path d="M0 0h8L4 5z" fill="#fff"/></svg>EURJPY.I,H4  127.192 127.192 126.701 126.740</div>
                </div>
                <div class="prices">${prices.map(p => `<div>${p}</div>`).join('')}<div class="now">126.740</div></div>
                <div class="dates">${dates.map(d => `<div>${d}</div>`).join('')}</div>
            </div>
        `);
    }
}
customElements.define('price-chart', PriceChart);

class TradeTerminal extends HTMLElement {
    connectedCallback() {
        const widths = [117, 202, 91, 73, 91, 91, 91, 92, 201, 91, 91];
        const heads = ['Ордер', 'Время', 'Тип', 'Объём', 'Символ', 'Цена', 'S / L', 'T / P', 'Время', 'Цена', 'Своп', 'Прибыль'];
        const deals = [
            ['150950', '2013.04.01 13:01', 'buy', '0.10', 'eurusd.i', '1.28201', '0.00000', '0.00000', '2013.04.01 16:53', '1.28515', '0.00', '31.40'],
            ['153368', '2013.04.01 16:53', 'buy', '0.10', 'eurjpy.i', '119.922', '0.000', '129.800', '2013.04.04 10:20', '122.251', '0.45', '243.94'],
            ['180396', '2013.04.04 10:36', 'buy', '0.10', 'eurusd.i', '1.28073', '0.00000', '1.31039', '2013.04.05 08:47', '1.29211', '-0.06', '113.80'],
            ['196279', '2013.04.05 13:43', 'buy', '0.20', 'eurjpy.i', '125.662', '0.000', '128.000', '2013.04.05 18:47', '126.998', '0.00', '273.80']
        ];
        const first = (icon, text) => `<td><span><x-icon name="${icon}"></x-icon>${text}</span></td>`;
        shadow(this, `
            :host { display: flex; padding: 4px 2px 3px 0; min-width: 0; }
            .side { width: 14px; margin-right: 1px; display: flex; flex-direction: column; align-items: center; flex: none; }
            .side button { height: 13px; padding: 0; border: 0; background: none; display: grid; place-items: center; }
            .side div { flex: 1; width: 13px; writing-mode: vertical-rl; transform: rotate(180deg); background: linear-gradient(0deg, #d8e5f1, #bccddd); font: 11px/13px var(--narrow); color: #44546a; padding-top: 4px; }
            .main { flex: 1; min-width: 0; display: flex; flex-direction: column; border: 1px solid var(--line); border-width: 1px 0 0 1px; background: #fff; }
            .list { flex: 1; padding-right: 2px; }
            table { width: 100%; table-layout: fixed; border-collapse: collapse; }
            th { height: 24px; padding: 0 4px; font-weight: normal; text-align: right; background: linear-gradient(#fff 50%, #f3f5f8); border-right: 1px solid #e2e6ea; border-bottom: 1px solid #d0d0d0; }
            th:first-child { text-align: left; padding-left: 6px; }
            th svg { margin-left: 12px; }
            td { height: 20px; padding: 0 2px; text-align: right; border-right: 1px solid #c8c8c8; border-bottom: 1px solid #c8c8c8; }
            td:last-child, th:last-child { border-right: 0; padding-right: 4px; }
            th:last-child { padding-right: 6px; }
            td span { display: flex; align-items: center; gap: 6px; }
            td x-icon { width: 16px; height: 16px; }
            tr.odd td { background: #ebebeb; }
            tfoot td { background: #c8c8c8; border: 0; font-weight: bold; white-space: pre; }
        `, `
            <div class="side"><button aria-label="Закрыть"><svg width="7" height="7" viewBox="0 0 7 7"><path d="M1 1l5 5M6 1L1 6" stroke="#000" stroke-width="1.600"/></svg></button><div>Терминал</div></div>
            <div class="main">
                <div class="list">
                    <table>
                        <colgroup>${widths.map(w => `<col style="width: ${w}px">`).join('')}<col></colgroup>
                        <thead><tr>${heads.map((t, i) => `<th>${t}${i ? '' : '<svg width="8" height="8"><path d="M1 8l4-8" stroke="#999" fill="none"/></svg>'}</th>`).join('')}</tr></thead>
                        <tbody>
                            <tr>${first('deposit', '149807')}<td>2013.04.01 10:51</td><td>balance</td><td colspan="8">Deposit WDYT</td><td>200.00</td></tr>
                            ${deals.map((d, i) => `<tr class="${i % 2 ? '' : 'odd'}">${first('deal', d[0])}${d.slice(1).map(v => `<td>${v}</td>`).join('')}</tr>`).join('')}
                        </tbody>
                        <tfoot><tr><td colspan="11"><span><x-icon name="total"></x-icon>Прибыль: 663.33  Кредит: 0.00  Депозит: 200.00  Снятие: 0.00</span></td><td>863.33</td></tr></tfoot>
                    </table>
                </div>
                <tab-strip tabs="Торговля|История Счета|Алерты|Почтовый ящик|Эксперты|Журнал" active="1"></tab-strip>
            </div>
        `);
    }
}
customElements.define('trade-terminal', TradeTerminal);

class StatusBar extends HTMLElement {
    connectedCallback() {
        const cells = [['Default', 114], ['2013.03.21 12:00', 104], ['O: 123.008', 72], ['H: 123.437', 71], ['L: 122.465', 67], ['C: 122.886', 69], ['V: 28262', 65]];
        const bars = Array.from({ length: 8 }, (_, i) => `<path d="M${i * 3} 0h2v${9 - i}h-2z" fill="#5c7f1a"/><path d="M${i * 3} ${10 - i}h2V12h-2z" fill="#a52810"/>`).join('');
        shadow(this, `
            :host { display: flex; height: 22px; padding: 2px 0 1px; border-top: 1px solid var(--line); line-height: 20px; white-space: nowrap; }
            .help { flex: 1; padding-left: 2px; }
            .cell { border-left: 1px solid var(--line); padding-left: 4px; }
            .net { width: 163px; display: flex; align-items: center; padding-left: 5px; gap: 42px; }
            .net .size { margin-left: auto; align-self: flex-end; }
        `, `
            <div class="help">Для справки, нажмите F1</div>
            ${cells.map(([t, w]) => `<div class="cell" style="width: ${w}px">${t}</div>`).join('')}
            <div class="cell net">
                <svg width="24" height="12">${bars}</svg><span>7/0 kb</span>
                <svg class="size" width="12" height="12"><path d="M0 12L12 0M4 12l8-8M8 12l4-4" stroke="#999" stroke-width="1.500"/></svg>
            </div>
        `);
    }
}
customElements.define('status-bar', StatusBar);

class TaskBar extends HTMLElement {
    connectedCallback() {
        shadow(this, `
            :host { display: flex; gap: 3px; height: 8px; padding-left: 12px; border-top: 1px solid #1a2b44; overflow: hidden; background: linear-gradient(#ffffff50, #ffffff00 3px), linear-gradient(90deg, #23466f, #315d8a 13%, #6c4a75 27%, #8a5678 35%, #5f4473 55%, #4a6aa5 59%, #6b9ad0 65%, #5d6f95 70%, #6a7fb8 78%, #4a5570 85%, #22344f 90%, #1c2c44); }
            svg { width: 168px; height: 8px; flex: none; }
            i { width: 59px; border: 1px solid #3a4258; border-bottom: 0; border-radius: 3px 3px 0 0; background: linear-gradient(90deg, #b9c6d6, #8f8197); }
            i:last-child { background: linear-gradient(90deg, #e6dfe8, #b898b4); }
        `, `
            <svg viewBox="0 0 168 8"><ellipse cx="15" cy="11" rx="14" ry="10" fill="#9fb6cc" stroke="#dce8f2"/><path d="M80 8q7-8 13-2" fill="none" stroke="#e3b23c" stroke-width="2"/><path d="M125 6h15v2h-15z" fill="#d9b35a"/></svg>
            <i></i><i></i><i></i>
        `);
    }
}
customElements.define('task-bar', TaskBar);
</script>
</body>
</html>
